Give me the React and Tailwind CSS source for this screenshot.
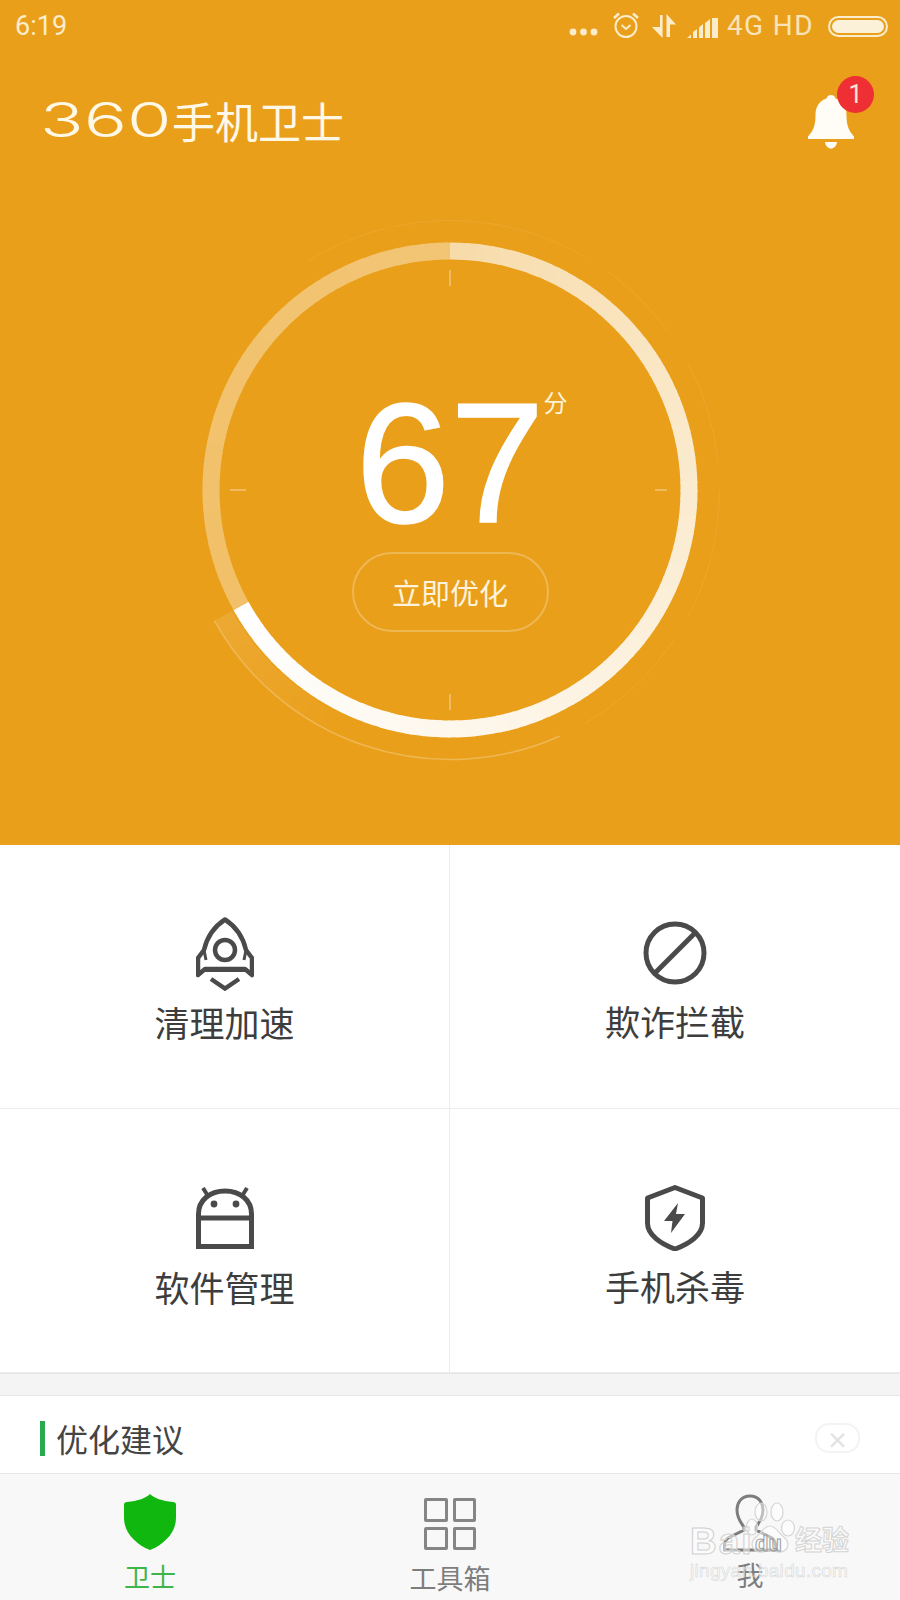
import React from 'react'

const CJK = "font-['Noto_Sans_CJK_SC','Noto_Sans',sans-serif]"
const CX = 280
const CY = 280

// point on the ring, angle is clockwise from 12 o'clock
const pt = (r, deg) => {
  const a = (deg - 90) * Math.PI / 180
  return [CX + r * Math.cos(a), CY + r * Math.sin(a)]
}

const arc = (r, from, to) => {
  const [x1, y1] = pt(r, from)
  const [x2, y2] = pt(r, to)
  const large = to - from > 180 ? 1 : 0
  return `M${x1} ${y1}A${r} ${r} 0 ${large} 1 ${x2} ${y2}`
}

// white over the orange, solid so overlapping segments leave no stripes
const mix = (o) => {
  const ch = (v) => Math.round(v + (255 - v) * o)
  return `rgb(${ch(234)},${ch(159)},${ch(26)})`
}

const Gauge = () => {
  const segs = []
  // filled part goes from soft cream at the top to white at the end
  for (let d = 0; d < 241; d += 2) {
    const t = d / 241
    segs.push(<path key={'a' + d} d={arc(239, d, Math.min(d + 2.4, 241))} stroke={mix(0.62 + 0.38 * Math.pow(t, 0.8))} strokeWidth="17" fill="none" />)
  }
  // rest of the ring
  for (let d = 241; d < 360; d += 2) {
    const t = (d - 241) / 119
    segs.push(<path key={'b' + d} d={arc(239, d, Math.min(d + 2.4, 360))} stroke={mix(0.34 + 0.06 * t)} strokeWidth="17" fill="none" />)
  }
  // soft wedge trailing the end of the progress
  const wedge = []
  for (let d = 241; d > 205; d -= 2) {
    const t = (241 - d) / 36
    wedge.push(<path key={'w' + d} d={arc(259, d - 2.2, d)} stroke={mix(0.1 * (1 - t))} strokeWidth="20" fill="none" />)
  }
  const ticks = [
    [280, 60, 280, 76],
    [280, 484, 280, 500],
    [60, 280, 76, 280],
    [485, 280, 497, 280],
  ]
  const faint = [[-32, -14], [-12, 30], [36, 54], [62, 84], [90, 118], [124, 150]]

  return (
    <svg width="560" height="560" viewBox="0 0 560 560" className="absolute left-0 top-0">
      {segs}
      {wedge}
      <path d={arc(269.5, 156, 241)} stroke="#fff" strokeWidth="1.5" fill="none" opacity="0.25" />
      {faint.map(([a, b], i) => (
        <path key={i} d={arc(269.5, a, b)} stroke="#fff" strokeWidth="1" fill="none" opacity="0.08" />
      ))}
      {ticks.map((t, i) => (
        <line key={i} x1={t[0]} y1={t[1]} x2={t[2]} y2={t[3]} stroke="#fff" strokeWidth="1.5" opacity="0.4" />
      ))}
    </svg>
  )
}

const StatusBar = () => (
  <div className="flex h-[52px] items-center justify-between pl-[15px] pr-[12px] text-[#fbeccb]">
    <span className="font-['Roboto',sans-serif] text-[27px] leading-none">6:19</span>
    <div className="flex items-center">
      <svg width="29" height="8" viewBox="0 0 29 8" className="mt-[11px]" fill="currentColor">
        <circle cx="4" cy="4" r="3.4" /><circle cx="14.5" cy="4" r="3.4" /><circle cx="25" cy="4" r="3.4" />
      </svg>
      <svg width="28" height="28" viewBox="0 0 28 28" className="ml-[14px] mb-[2px]" fill="none" stroke="currentColor" strokeWidth="2">
        <circle cx="14" cy="15.5" r="10.5" />
        <path d="M9.5 14l4.5 4 4.5-4" />
        <path d="M2 7l5-4.5M26 7l-5-4.5" strokeWidth="2.6" />
      </svg>
      <svg width="24" height="26" viewBox="0 0 24 26" className="ml-[12px]" fill="currentColor">
        <path d="M8 2h2.600v23L0 14h8zM14.500 1L24 11.500h-6V24h-3.500z" />
      </svg>
      <svg width="32" height="22" viewBox="0 0 32 22" className="ml-[11px] mt-[4px]" fill="currentColor">
        <path d="M0 21l4-3.500V21zM6 21v-6l4-3v9zM12 21V10.500l4-3.500v14zM18 21V6l5-4v19zM25 21V1h6v20z" />
      </svg>
      <span className="ml-[8px] font-['Roboto',sans-serif] text-[28px] leading-none tracking-[1.4px] opacity-90">4G HD</span>
      <div className="ml-[14px] flex h-[21px] w-[60px] items-center rounded-full border-2 border-[#fbeccb] p-[2px]">
        <div className="h-full w-full rounded-full bg-[#fbf0d8]" />
      </div>
    </div>
  </div>
)

const Header = () => (
  <div className="flex h-[104px] items-start justify-between pl-[40px] pr-[26px] text-[#fff8e6]">
    <div className="mt-[46px] flex h-[44px] items-center">
      <span className="inline-block w-[132px] origin-left scale-x-[1.5] font-['Inter',sans-serif] text-[48px] font-light leading-none">360</span>
      <span className={`${CJK} text-[43px] font-normal leading-none`}>手机卫士</span>
    </div>
    <div className="relative mt-[36px] h-[60px] w-[66px]">
      <svg width="46" height="54" viewBox="0 0 46 54" className="absolute left-0 top-[7px]" fill="#fffdf6">
        <path d="M23 0c2.500 0 4 1.500 4.500 3.500C35 6 38.500 12 38.500 20c0 9 1.500 15 7.500 21.500V44H0v-2.500C6 35 7.500 29 7.500 20 7.500 12 11 6 18.500 3.500 19 1.500 20.500 0 23 0z" />
        <path d="M17 47h12c-.5 4-3 6.500-6 6.500S17.500 51 17 47z" />
      </svg>
      <div className="absolute left-[29px] top-[-12px] flex h-[37px] w-[37px] items-center justify-center rounded-full bg-[#ee2f33] font-['Roboto',sans-serif] text-[25px] text-[#fde8d8]">1</div>
    </div>
  </div>
)

const RocketIcon = () => (
  <svg width="58" height="74" viewBox="0 0 58 74" fill="none" stroke="#4a4a4a" strokeWidth="4.500">
    <path d="M29 2.500C19 9 11 20 8 33L2 41v17l7-6h40l7 6V41l-6-8C47 20 39 9 29 2.500z" strokeLinejoin="round" />
    <circle cx="29" cy="33" r="10" />
    <path d="M8 33l2 10M50 33l-2 10" strokeWidth="3" />
    <path d="M9 52.500h40" strokeWidth="5" />
    <path d="M15 62l14 9.500L43 62" />
  </svg>
)

const BanIcon = () => (
  <svg width="64" height="64" viewBox="0 0 64 64" fill="none" stroke="#4a4a4a" strokeWidth="5">
    <circle cx="32" cy="32" r="29" />
    <path d="M12 52L52 12" />
  </svg>
)

const AndroidIcon = () => (
  <svg width="58" height="62" viewBox="0 0 58 62" fill="none" stroke="#4a4a4a" strokeWidth="5">
    <path d="M2.500 59.500V27C2.500 13 14 4 29 4s26.500 9 26.500 23v32.500z" />
    <path d="M2 31h54" />
    <path d="M7 1l5 8M51 1l-5 8" strokeWidth="4" />
    <circle cx="18" cy="17" r="3.400" fill="#4a4a4a" stroke="none" />
    <circle cx="40" cy="17" r="3.400" fill="#4a4a4a" stroke="none" />
  </svg>
)

const ShieldIcon = () => (
  <svg width="60" height="66" viewBox="0 0 60 66" fill="none" stroke="#4a4a4a" strokeWidth="5">
    <path d="M30 2.500L57.500 13v25C57.500 50 44 59 30 64 16 59 2.500 50 2.500 38V13z" strokeLinejoin="round" />
    <path d="M33 18L19 36h8.500L26 48l14-19h-9z" fill="#4a4a4a" stroke="none" />
  </svg>
)

const cards = [
  { label: '清理加速', icon: <RocketIcon />, box: 'pt-[72px]', gap: 'mt-[12px]', right: false },
  { label: '欺诈拦截', icon: <BanIcon />, box: 'pt-[76px]', gap: 'mt-[17px]', right: true },
  { label: '软件管理', icon: <AndroidIcon />, box: 'pt-[78px]', gap: 'mt-[19px]', right: false },
  { label: '手机杀毒', icon: <ShieldIcon />, box: 'pt-[76px]', gap: 'mt-[16px]', right: true },
]

const Watermark = () => (
  <div className="pointer-events-none absolute left-[688px] top-[1500px] w-[170px]">
    <svg width="50" height="54" viewBox="0 0 50 54" className="absolute left-[58px] top-[2px]" fill="#fff" fillOpacity="0.5" stroke="#d6d6d6" strokeWidth="1.200">
      <ellipse cx="15" cy="10" rx="6" ry="9" />
      <ellipse cx="31" cy="10" rx="6" ry="9" />
      <ellipse cx="6" cy="25" rx="5.500" ry="8" />
      <ellipse cx="42" cy="26" rx="6.500" ry="8" />
      <path d="M24 24c-6 0-9 7-15 12-6 5-2 15 7 14 5-1 10-1 16 0 9 1 13-8 7-14-6-4-9-12-15-12z" />
    </svg>
    <div className="absolute left-[2px] top-[23px] font-['Liberation_Sans',sans-serif] text-[37px] font-bold leading-none tracking-[2px] text-white/50 [-webkit-text-stroke:1px_#d0d0d0]">Bai</div>
    <div className="absolute left-[67px] top-[33px] font-['Liberation_Sans',sans-serif] text-[22px] font-bold leading-none text-white/30 [-webkit-text-stroke:1px_#9a9a9a]">du</div>
    <div className={`absolute left-[107px] top-[25px] ${CJK} whitespace-nowrap text-[27px] font-bold leading-none text-white/40 [-webkit-text-stroke:1px_#d4d4d4]`}>经验</div>
    <div className="absolute left-[2px] top-[61px] whitespace-nowrap font-['Liberation_Sans',sans-serif] text-[19px] leading-none tracking-[0.3px] text-white/40 [-webkit-text-stroke:0.6px_#d8d8d8]">jingyan.baidu.com</div>
  </div>
)

const App = () => {
  return (
    <div className={`relative h-[1600px] w-[900px] overflow-hidden bg-white ${CJK}`}>
      <div className="h-[845px] bg-[#ea9f1a]">
        <StatusBar />
        <Header />
        <div className="relative mx-auto mt-[54px] flex h-[560px] w-[560px] flex-col items-center">
          <Gauge />
          <div className="relative mt-[178px] flex h-[150px] items-start">
            <span className="font-['Liberation_Sans',sans-serif] text-[170px] leading-[150px] text-white [-webkit-text-stroke:1.5px_white]">67</span>
            <span className="absolute left-[188px] top-[2px] text-[24px] leading-none text-[#fdf3dd]">分</span>
          </div>
          <div className="relative mt-[14px] flex h-[80px] w-[197px] items-center justify-center rounded-full border-2 border-white/25 text-[29px] leading-none text-[#fdf3dd]">立即优化</div>
        </div>
      </div>

      <div className="grid grid-cols-2 grid-rows-[264px_264px] border-b border-[#e6e6e6]">
        {cards.map((c) => (
          <div key={c.label} className={`flex h-[264px] flex-col items-center border-b border-[#ececec] ${c.right ? '' : 'border-r'} ${c.box}`}>
            {c.icon}
            <span className={`${c.gap} text-[35px] leading-[38px] text-[#3d3d3d]`}>{c.label}</span>
          </div>
        ))}
      </div>

      <div className="h-[21px] bg-[#f4f4f4]" />

      <div className="flex h-[79px] items-center justify-between border-t border-b border-[#e6e6e6] pt-[7px] pl-[40px] pr-[40px]">
        <div className="flex items-center">
          <div className="h-[35px] w-[5px] bg-[#2aa84f]" />
          <span className="ml-[11px] text-[32px] leading-none text-[#444]">优化建议</span>
        </div>
        <div className="flex h-[30px] w-[45px] items-center justify-center rounded-[14px] border-2 border-[#f3f3f3] text-[22px] font-bold leading-none text-[#e2e2e2]">×</div>
      </div>

      <div className="grid h-[128px] grid-cols-3 bg-[#f8f8f8]">
        <div className="flex flex-col items-center pt-[20px]">
          <svg width="52" height="56" viewBox="0 0 52 56" fill="#0fb70f">
            <path d="M26 0c4 4 12 7 23 8 2 0 3 1 3 3v13c0 14-11 26-26 32C11 50 0 38 0 24V11c0-2 1-3 3-3 11-1 19-4 23-8z" />
          </svg>
          <span className="mt-[13px] text-[26px] leading-none text-[#3eb54a]">卫士</span>
        </div>
        <div className="flex flex-col items-center pt-[24px]">
          <div className="grid h-[52px] w-[52px] grid-cols-2 gap-[5px]">
            <div className="rounded-[2px] border-[3px] border-[#858585]" />
            <div className="rounded-[2px] border-[3px] border-[#858585]" />
            <div className="rounded-[2px] border-[3px] border-[#858585]" />
            <div className="rounded-[2px] border-[3px] border-[#858585]" />
          </div>
          <span className="mt-[14px] text-[27px] leading-none text-[#7d7d7d]">工具箱</span>
        </div>
        <div className="flex flex-col items-center pt-[20px]">
          <svg width="54" height="58" viewBox="0 0 54 58" fill="none" stroke="#7d7d7d" strokeWidth="3">
            <path d="M27 2c-9 0-13 7-13 14 0 8 4 13 7 17v3L5 44c-3 2-4 5-4 12h52c0-7-1-10-4-12L33 36v-3c3-4 7-9 7-17 0-7-4-14-13-14z" />
          </svg>
          <span className="mt-[9px] text-[27px] leading-none text-[#7d7d7d]">我</span>
        </div>
      </div>

      <Watermark />
    </div>
  )
}

export default App
